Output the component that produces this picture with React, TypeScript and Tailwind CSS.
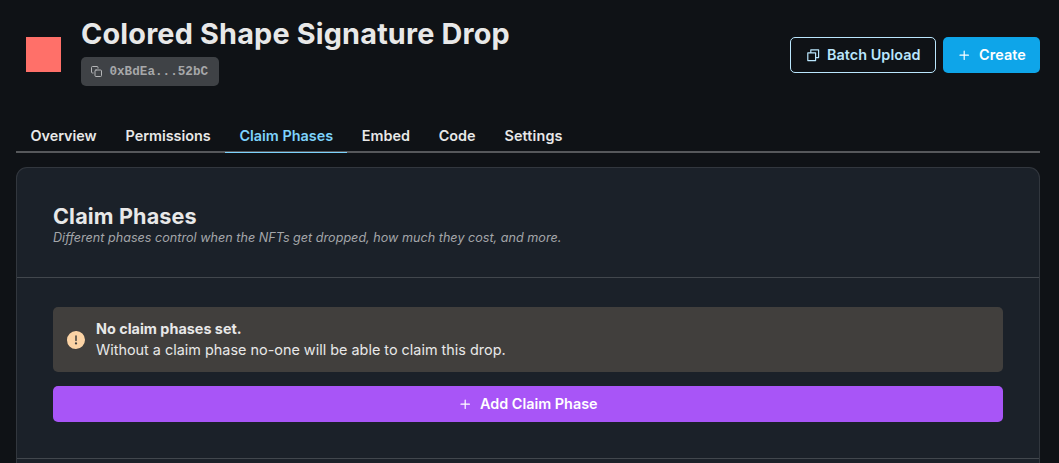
import { FiPlus } from "react-icons/fi";
import { RiCheckboxMultipleBlankLine } from "react-icons/ri";

const tabs = ["Overview", "Permissions", "Claim Phases", "Embed", "Code", "Settings"];

function CopyIcon() {
  return (
    <svg
      viewBox="0 0 11 11"
      className="size-[11px] shrink-0 text-[#b5b6b8]"
      fill="none"
      stroke="currentColor"
      strokeLinecap="round"
      strokeLinejoin="round"
    >
      <rect x="4" y="4" width="6.5" height="6.5" rx="1" />
      <path d="M2.2 7H1.5a1 1 0 0 1-1-1V1.5a1 1 0 0 1 1-1H6a1 1 0 0 1 1 1v.7" />
    </svg>
  );
}

function WarningIcon() {
  return (
    <svg viewBox="0 0 24 24" className="size-[18px] shrink-0 text-[#fbd3a5]" fill="currentColor">
      <path d="M11.983,0a12.206,12.206,0,0,0-8.51,3.653A11.8,11.8,0,0,0,0,12.207,11.779,11.779,0,0,0,11.8,24h.214A12.111,12.111,0,0,0,24,11.791h0A11.766,11.766,0,0,0,11.983,0ZM10.5,16.542a1.476,1.476,0,0,1,1.449-1.53h.027a1.527,1.527,0,0,1,1.523,1.47,1.475,1.475,0,0,1-1.449,1.53h-.027A1.529,1.529,0,0,1,10.5,16.542ZM11,12.5v-6a1,1,0,0,1,2,0v6a1,1,0,1,1-2,0Z" />
    </svg>
  );
}

export default function App() {
  return (
    <div className="h-[463px] overflow-hidden bg-[#0f1216] pr-[19px] pl-4 font-['Inter',sans-serif] text-[14.4px] text-[#e8e8e8]">
      <header className="flex h-[119px] items-start justify-between">
        <div className="flex">
          <div className="mt-[37px] ml-[10px] size-[35px] bg-[#ff7069]" />
          <div className="ml-5 pt-[16px]">
            <h1 className="h-[41px] text-[28.8px] leading-[35px] font-bold tracking-[0.18px] whitespace-nowrap">
              Colored Shape Signature Drop
            </h1>
            <button className="flex h-[29px] w-[138px] items-center gap-[7.4px] rounded-[5px] bg-[#3f4246] pl-[10px] font-['Liberation_Mono',monospace] text-[12.6px] font-bold text-[#a7a8aa]">
              <CopyIcon />
              <span className="pt-[2px] tracking-[0.04px]">0xBdEa...52bC</span>
            </button>
          </div>
        </div>
        <div className="mt-[37px] flex gap-[7px] font-semibold">
          <button className="flex h-9 w-[146px] items-center gap-[6.6px] rounded-[5px] border border-[#bae6fd] pl-[15px] text-[#bae6fd]">
            <RiCheckboxMultipleBlankLine className="size-[14.4px]" />
            <span className="tracking-[0.04px]">Batch Upload</span>
          </button>
          <button className="flex h-9 w-[97px] items-center gap-[7.2px] rounded-[5px] bg-[#0ea5e9] pl-[14.4px] text-white">
            <FiPlus className="size-[14.4px]" />
            <span className="tracking-[0.1px]">Create</span>
          </button>
        </div>
      </header>
      <nav className="flex h-[34px] border-b-2 border-[#56585b] font-semibold">
        {tabs.map((tab) => (
          <a
            key={tab}
            className={
              tab === "Claim Phases"
                ? "h-[34px] border-b border-[#7dd3fc] px-[14.3px] pt-[6px] leading-[22px] text-[#7dd3fc]"
                : tab === "Settings"
                  ? "h-[34px] px-[14.4px] pt-[6px] leading-[22px] tracking-[0.15px]"
                  : "h-[34px] px-[14.4px] pt-[6px] leading-[22px]"
            }
          >
            {tab}
          </a>
        ))}
      </nav>
      <main className="mt-[14px] h-[320px] rounded-t-[11px] border border-b-0 border-[#32373e] bg-[#1b2129]">
        <section className="h-[110px] border-b border-[#42474d] px-9 pt-[35px]">
          <h2 className="text-[21.6px] leading-[26px] font-bold tracking-[0.15px]">Claim Phases</h2>
          <p className="text-[12.6px] leading-[17px] tracking-[0.015px] text-[#a4a6a9] italic">
            Different phases control when the NFTs get dropped, how much they cost, and more.
          </p>
        </section>
        <section className="h-[181px] border-b border-[#42474d] px-9 pt-[29px]">
          <div className="flex h-[65px] items-center gap-[11px] rounded-[5px] bg-[#413f3d] pl-[14px]">
            <WarningIcon />
            <div className="pb-[2px] leading-[21px]">
              <p className="font-bold">No claim phases set.</p>
              <p className="tracking-[0.01px]">Without a claim phase no-one will be able to claim this drop.</p>
            </div>
          </div>
          <button className="mt-[14px] flex h-9 w-full items-center justify-center gap-[7.2px] rounded-[5px] bg-[#a855f7] font-semibold text-white">
            <FiPlus className="size-[14.4px]" />
            <span>Add Claim Phase</span>
          </button>
        </section>
      </main>
    </div>
  );
}
